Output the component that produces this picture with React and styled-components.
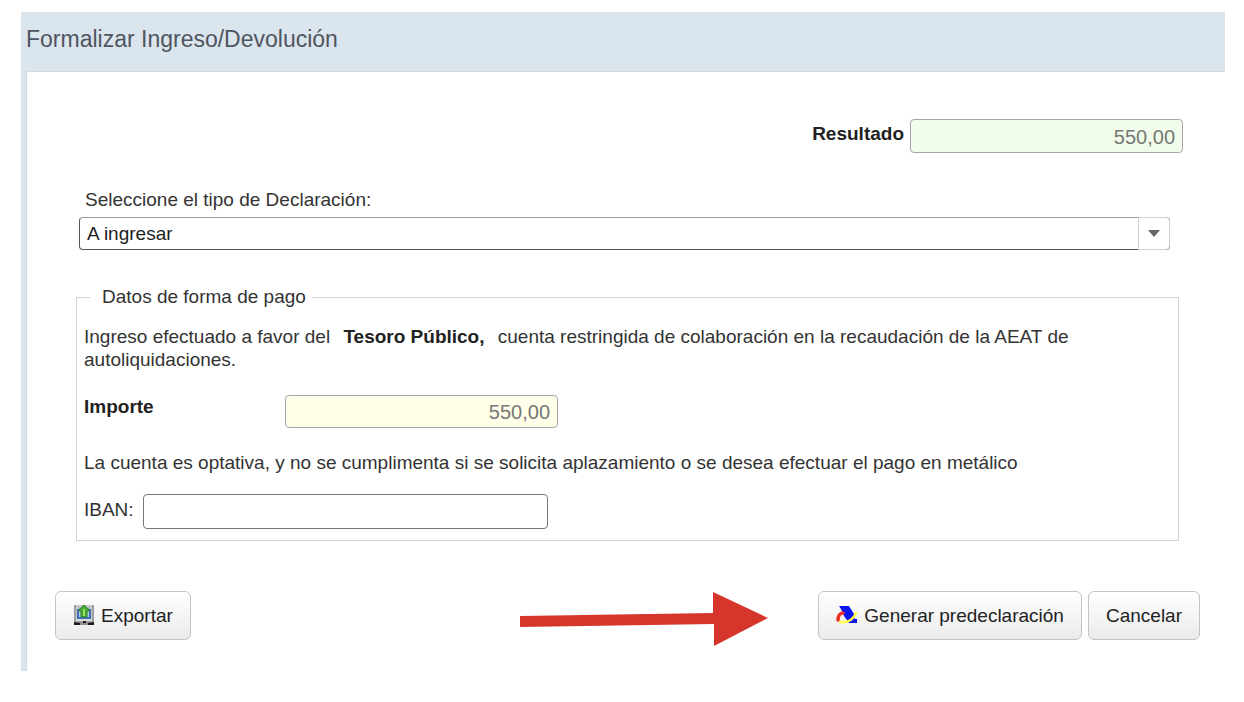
import { useState } from "react";
import styled, { createGlobalStyle } from "styled-components";

function ExportIcon() {
  return (
    <svg width="22" height="22" viewBox="0 0 22 22" aria-hidden="true">
      <path d="M1 1h20v17H1z" fill="#a0a0a0" />
      <path d="M3 1h16v15H3z" fill="#c6c8ca" />
      <path d="M4 5h2l5-4 5 4h2v10H4z" fill="#3d6fb8" />
      <path d="M6 7h10v6H6z" fill="#b5cbe6" />
      <path d="M11 1l6 6h-3v6H8V7H5z" fill="#45a832" stroke="#2d8526" />
      <path d="M10 5h2v7h-2z" fill="#9de06a" />
      <path d="M3 15h16v2H3z" fill="#dcdcdc" />
      <path d="M1 18h20v3H1z" fill="#8f8f8f" />
      <path d="M1 18l6 1v2H1zM21 18l-6 1v2h6zM10 17h3v2h-3z" fill="#1c1c1c" />
    </svg>
  );
}

function AgencyIcon() {
  return (
    <svg width="22" height="22" viewBox="0 0 22 22" aria-hidden="true">
      <path d="M3 2h10l5 8 1 5h2v4h-8L8 12 5 5z" fill="#0a14f0" />
      <path
        d="M2 16C2 12 4 9 7 9"
        fill="none"
        stroke="#ee2e24"
        strokeWidth="3.5"
        strokeLinecap="round"
      />
      <path
        d="M4 18c7 1 13-2 16-9"
        fill="none"
        stroke="#ffff46"
        strokeWidth="2.5"
        strokeLinecap="round"
      />
    </svg>
  );
}

function App() {
  const [tipo, setTipo] = useState("ingresar");
  const [iban, setIban] = useState("");

  return (
    <>
      <GlobalStyle />
      <Dialog>
        <DialogTitle>Formalizar Ingreso/Devolución</DialogTitle>

        <DialogBody>
          <ResultRow>
            <BoldLabel htmlFor="resultado">Resultado</BoldLabel>
            <AmountInput id="resultado" $tint="#f1fdea" $tall value="550,00" readOnly />
          </ResultRow>

          <TypeField>
            <label htmlFor="tipo">Seleccione el tipo de Declaración:</label>
            <SelectBox>
              <select
                id="tipo"
                value={tipo}
                onChange={(e) => setTipo(e.target.value)}
              >
                <option value="ingresar">A ingresar</option>
              </select>
              <Caret>
                <svg width="12" height="7" viewBox="0 0 12 7" aria-hidden="true">
                  <path d="M0 0h12L6 7z" fill="#666" />
                </svg>
              </Caret>
            </SelectBox>
          </TypeField>

          <PaymentData>
            <legend>Datos de forma de pago</legend>
            <p>
              Ingreso efectuado a favor del <b>Tesoro Público,</b> cuenta
              restringida de colaboración en la recaudación de la AEAT de
              <br />
              autoliquidaciones.
            </p>
            <AmountRow>
              <BoldLabel htmlFor="importe">Importe</BoldLabel>
              <AmountInput id="importe" $tint="#ffffe9" value="550,00" readOnly />
            </AmountRow>
            <p>
              La cuenta es optativa, y no se cumplimenta si se solicita
              aplazamiento o se desea efectuar el pago en metálico
            </p>
            <IbanRow>
              <label htmlFor="iban">IBAN:</label>
              <IbanInput
                id="iban"
                value={iban}
                onChange={(e) => setIban(e.target.value)}
              />
            </IbanRow>
          </PaymentData>

          <Footer>
            <Button type="button">
              <ExportIcon />
              Exportar
            </Button>
            <Actions>
              <Arrow viewBox="0 0 249 56" aria-hidden="true">
                <path d="M1 25L194 22V1L249 27L195 55V33L1 36z" fill="#d5352b" />
              </Arrow>
              <Button type="button">
                <AgencyIcon />
                Generar predeclaración
              </Button>
              <Button type="button">Cancelar</Button>
            </Actions>
          </Footer>
        </DialogBody>
      </Dialog>
    </>
  );
}

export default App;

const GlobalStyle = createGlobalStyle`
  * {
    box-sizing: border-box;
  }

  body {
    margin: 0;
    background: #fff;
    color: #333;
    font-family: "Liberation Sans", Arial, sans-serif;
    font-size: 19px;
    line-height: 24px;
  }

  input, select, button {
    font: inherit;
  }
`;

const Dialog = styled.div`
  margin: 12px 19px 32px 21px;
  padding-left: 5px;
  background: #dbe5ed;
`;

const DialogTitle = styled.h1`
  margin: 0;
  padding: 13px 0 18px;
  color: #4f5560;
  font-size: 23px;
  font-weight: 400;
  line-height: 28px;
`;

const DialogBody = styled.div`
  padding: 47px 25px 24px 28px;
  background: #fff;
  border-top: 1px solid #d3d8dc;
  border-left: 1px solid #d3d8dc;
`;

const BoldLabel = styled.label`
  color: #222;
  font-weight: bold;
`;

const AmountInput = styled.input`
  width: 273px;
  height: ${(props) => (props.$tall ? 34 : 33)}px;
  padding: 2px 7px 0;
  background: ${(props) => props.$tint};
  border: 1px solid #a6a6a6;
  border-radius: 4px;
  color: #777;
  font-size: 20px;
  text-align: right;
`;

const ResultRow = styled.div`
  display: flex;
  justify-content: flex-end;
  gap: 6px;
  padding: 0 17px 0 0;

  label {
    padding-top: 3px;
  }
`;

const TypeField = styled.div`
  margin: 35px 30px 0 24px;

  label {
    display: block;
    padding: 0 6px 5px;
  }
`;

const SelectBox = styled.div`
  display: grid;

  select {
    grid-area: 1 / 1;
    width: 100%;
    height: 33px;
    padding: 0 36px 0 7px;
    appearance: none;
    background: #fff;
    border: 1px solid #555;
    border-top-color: #999;
    border-radius: 4px;
    color: #222;
  }
`;

const Caret = styled.span`
  grid-area: 1 / 1;
  justify-self: end;
  display: flex;
  align-items: center;
  justify-content: center;
  width: 32px;
  background: #fff;
  border: 1px solid #d0d0d0;
  border-radius: 0 4px 4px 0;
  pointer-events: none;
`;

const PaymentData = styled.fieldset`
  margin: 35px 21px 0;
  padding: 16px 7px 11px;
  border: 1px solid #d3d3d3;

  legend {
    margin-left: 6px;
    padding: 0 6px 0 12px;
  }

  p {
    margin: 0;
    line-height: 23px;
  }

  b {
    margin: 0 8px;
    color: #222;
  }
`;

const AmountRow = styled.div`
  display: grid;
  grid-template-columns: 201px auto;
  justify-content: start;
  align-items: start;
  margin: 24px 0 23px;
`;

const IbanRow = styled.div`
  display: flex;
  gap: 9px;
  margin-top: 20px;

  label {
    padding-top: 4px;
  }
`;

const IbanInput = styled.input`
  width: 405px;
  height: 35px;
  padding: 0 7px;
  background: #fff;
  border: 1px solid #777;
  border-radius: 4px;
`;

const Footer = styled.div`
  display: flex;
  justify-content: space-between;
  align-items: flex-start;
  margin-top: 50px;
`;

const Actions = styled.div`
  display: flex;
  align-items: flex-start;
  gap: 6px;
`;

const Arrow = styled.svg`
  width: 249px;
  height: 56px;
  margin-right: 44px;
`;

const Button = styled.button`
  display: flex;
  align-items: center;
  gap: 6px;
  height: 49px;
  padding: 0 17px;
  background: linear-gradient(#fff, #ebebeb);
  border: 1px solid #c4c4c4;
  border-radius: 6px;
  color: #222;
  cursor: pointer;

  svg {
    margin-bottom: 2px;
  }
`;
